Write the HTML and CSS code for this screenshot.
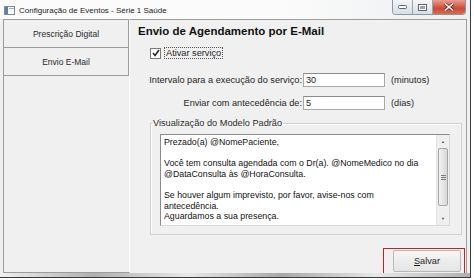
FILE: index.html
```html
<!DOCTYPE html>
<html lang="pt-BR">
<head>
    <meta charset="UTF-8">
    <title>Configuração de Eventos - Série 1 Saúde</title>
    <link rel="stylesheet" href="styles.css">
</head>
<body>
    <div class="window">
        <!-- Title bar -->
        <div class="titlebar">
            <svg class="app-icon" width="11" height="9" viewBox="0 0 11 9">
                <rect x="0.5" y="0.5" width="10" height="8" fill="#fff" stroke="#7a8a9c"/>
                <rect x="1" y="1" width="3" height="7" fill="#5b7fa8"/>
                <rect x="5" y="2" width="5" height="1" fill="#9fb2c6"/>
            </svg>
            <span class="title">Configuração de Eventos - Série 1 Saúde</span>
            <div class="win-buttons">
                <div class="win-btn">
                    <svg width="9" height="4" viewBox="0 0 9 4"><rect x="0.5" y="0.5" width="8" height="3" rx="1" fill="#fff" stroke="#5a6470"/></svg>
                </div>
                <div class="win-btn">
                    <svg width="9" height="7" viewBox="0 0 9 7"><rect x="0.5" y="0.5" width="8" height="6" fill="#fff" stroke="#5a6470"/><rect x="2" y="2" width="5" height="3" fill="#9aa4ae"/></svg>
                </div>
                <div class="win-btn close">
                    <svg width="10" height="8" viewBox="0 0 10 8"><path d="M1 0.5 L9 7.5 M9 0.5 L1 7.5" stroke="#6b2020" stroke-width="3"/><path d="M1 0.5 L9 7.5 M9 0.5 L1 7.5" stroke="#fff" stroke-width="1.6"/></svg>
                </div>
            </div>
        </div>

        <div class="main">
            <!-- Left tabs -->
            <div class="sidebar">
                <div class="tab">Prescrição Digital</div>
                <div class="tab">Envio E-Mail</div>
            </div>

            <!-- Content -->
            <div class="content">
                <h1>Envio de Agendamento por E-Mail</h1>

                <div class="check-row">
                    <span class="checkbox">
                        <svg width="8" height="8" viewBox="0 0 8 8"><path d="M1 4 L3 6.5 L7 1" fill="none" stroke="#222" stroke-width="1.5"/></svg>
                    </span>
                    <span class="check-label">Ativar serviço</span>
                </div>

                <div class="fields">
                    <label>Intervalo para a execução do serviço:</label>
                    <div class="input">30</div>
                    <span class="unit">(minutos)</span>

                    <label>Enviar com antecedência de:</label>
                    <div class="input">5</div>
                    <span class="unit">(dias)</span>
                </div>

                <fieldset class="group">
                    <legend>Visualização do Modelo Padrão</legend>
                    <div class="memo">
                        <div class="memo-text">
                            <p>Prezado(a) @NomePaciente,</p>
                            <p>Você tem consulta agendada com o Dr(a). @NomeMedico no dia<br>@DataConsulta às @HoraConsulta.</p>
                            <p>Se houver algum imprevisto, por favor, avise-nos com<br>antecedência.<br>Aguardamos a sua presença.</p>
                        </div>
                        <div class="scrollbar">
                            <div class="arrow">&#9650;</div>
                            <div class="thumb"><span class="grip"></span></div>
                            <div class="track"></div>
                            <div class="arrow">&#9660;</div>
                        </div>
                    </div>
                </fieldset>

                <div class="footer">
                    <div class="save-wrap">
                        <button class="save"><u>S</u>alvar</button>
                    </div>
                </div>
            </div>
        </div>
        <div class="bottom-edge"></div>
    </div>
</body>
</html>
```

FILE: styles.css
```css
body {
    margin: 0;
    background-color: #fff;
    font-family: "Liberation Sans", Arial, sans-serif;
    font-size: 9.2px;
    color: #1e1e1e;
}
.window {
    width: 471px;
    height: 278px;
    border-right: 1px solid #3a3a3a;
    border-bottom: 1px solid #3a3a3a;
    box-sizing: border-box;
    display: flex;
    flex-direction: column;
    background-color: #f0f0f0;
    padding-left: 3px;
}
.titlebar {
    height: 19px;
    flex-shrink: 0;
    display: flex;
    align-items: center;
    background: linear-gradient(to right, #fbfbfb 60%, #eceef0);
    margin-left: -3px;
    padding-left: 4px;
}
.app-icon {
    margin-right: 4px;
    margin-top: 1px;
}
.title {
    font-size: 8px;
    color: #222;
    margin-top: 1px;
}
.win-buttons {
    margin-left: auto;
    align-self: flex-start;
    display: flex;
    margin-right: 4px;
    border: 1px solid #8e98a4;
    border-top: none;
    border-radius: 0 0 4px 4px;
    overflow: hidden;
}
.win-btn {
    width: 19px;
    height: 14px;
    display: flex;
    align-items: center;
    justify-content: center;
    background: linear-gradient(#f4f6f8, #d9dee4);
    border-right: 1px solid #9aa4ae;
}
.win-btn.close {
    width: 32px;
    border-right: none;
    background: linear-gradient(#e6a08e, #cc4a36 60%, #d76a50);
}
.main {
    flex: 1;
    display: flex;
    min-height: 0;
}
.sidebar {
    width: 127px;
    box-sizing: border-box;
    border: 1px solid #9c9c9c;
    border-right: 1px solid #fbfbfb;
    background-color: #f0f0f0;
}
.tab {
    height: 27px;
    display: flex;
    align-items: center;
    justify-content: center;
    border-bottom: 1px solid #9c9c9c;
    border-right: 1px solid #9c9c9c;
    font-size: 8.5px;
    color: #2a2a2a;
}
.content {
    flex: 1;
    border-top: 1px solid #9c9c9c;
    border-right: 1px solid #9c9c9c;
    padding: 4px 4px 0 8px;
    display: flex;
    flex-direction: column;
    min-width: 0;
    margin-right: 3px;
}
h1 {
    margin: 0;
    font-size: 11.5px;
    font-weight: bold;
    color: #111;
    line-height: 14px;
}
.check-row {
    display: flex;
    align-items: center;
    margin: 9px 0 0 12px;
    height: 12px;
}
.checkbox {
    width: 9px;
    height: 9px;
    border: 1px solid #7a7a7a;
    background-color: #fff;
    display: flex;
    align-items: center;
    justify-content: center;
    margin-right: 3px;
}
.check-label {
    border: 1px dotted #555;
    padding: 0 1px;
    line-height: 10px;
}
.fields {
    display: grid;
    grid-template-columns: 160px 82px auto;
    column-gap: 1px;
    row-gap: 9px;
    align-items: center;
    margin: 14px 0 0 4px;
}
.fields label {
    text-align: right;
    white-space: nowrap;
}
.input {
    height: 14px;
    box-sizing: border-box;
    border: 1px solid #a8a8a8;
    border-top-color: #8c8c8c;
    background-color: #fff;
    padding-left: 2px;
    line-height: 12px;
}
.unit {
    padding-left: 5px;
}
.group {
    margin: 8px 0 0 12px;
    width: 312px;
    box-sizing: border-box;
    height: 117px;
    border: 1px solid #d0d0d0;
    box-shadow: inset 1px 1px 0 #fff;
    padding: 6px 11px 9px 9px;
}
.group legend {
    padding: 0 1px;
    margin-left: -8px;
    color: #2a2a2a;
}
.memo {
    display: flex;
    height: 90px;
    border: 1px solid #8c8c8c;
    border-right-color: #d8d8d8;
    border-bottom-color: #d8d8d8;
    background-color: #fff;
}
.memo-text {
    flex: 1;
    padding: 2px 3px;
    line-height: 10.6px;
    font-size: 8.8px;
    color: #111;
}
.memo-text p {
    margin: 0 0 10.6px 0;
}
.scrollbar {
    width: 12px;
    display: flex;
    flex-direction: column;
    background-color: #efefef;
    border-left: 1px solid #e4e4e4;
}
.arrow {
    height: 13px;
    font-size: 4px;
    color: #555;
    display: flex;
    align-items: center;
    justify-content: center;
}
.thumb {
    height: 56px;
    margin: 0 1px;
    border: 1px solid #a5a5a5;
    border-radius: 2px;
    background: linear-gradient(to right, #f2f2f2, #d8d8d8);
    display: flex;
    align-items: center;
    justify-content: center;
}
.grip {
    width: 5px;
    height: 5px;
    background: repeating-linear-gradient(#7a7a7a 0 1px, transparent 1px 2px);
}
.track {
    flex: 1;
}
.footer {
    display: flex;
    justify-content: flex-end;
    margin-top: 13px;
}
.save-wrap {
    border: 1px solid #c62020;
    padding: 1px 3px 1px 9px;
    margin-right: -3px;
}
.save {
    width: 68px;
    height: 22px;
    font-family: "Liberation Sans", Arial, sans-serif;
    font-size: 9.2px;
    color: #1e1e1e;
    background: linear-gradient(#f6f6f6, #e4e4e4);
    border: 1px solid #b8b8b8;
    border-radius: 2px;
    padding: 0;
}
.bottom-edge {
    height: 4px;
    flex-shrink: 0;
    background: linear-gradient(to right, #f0f0f0, #b0b0b0 20%, #e8e8e8 40%, #a8a8a8 60%, #e8e8e8 80%, #b0b0b0);
    margin-left: -3px;
}
```
